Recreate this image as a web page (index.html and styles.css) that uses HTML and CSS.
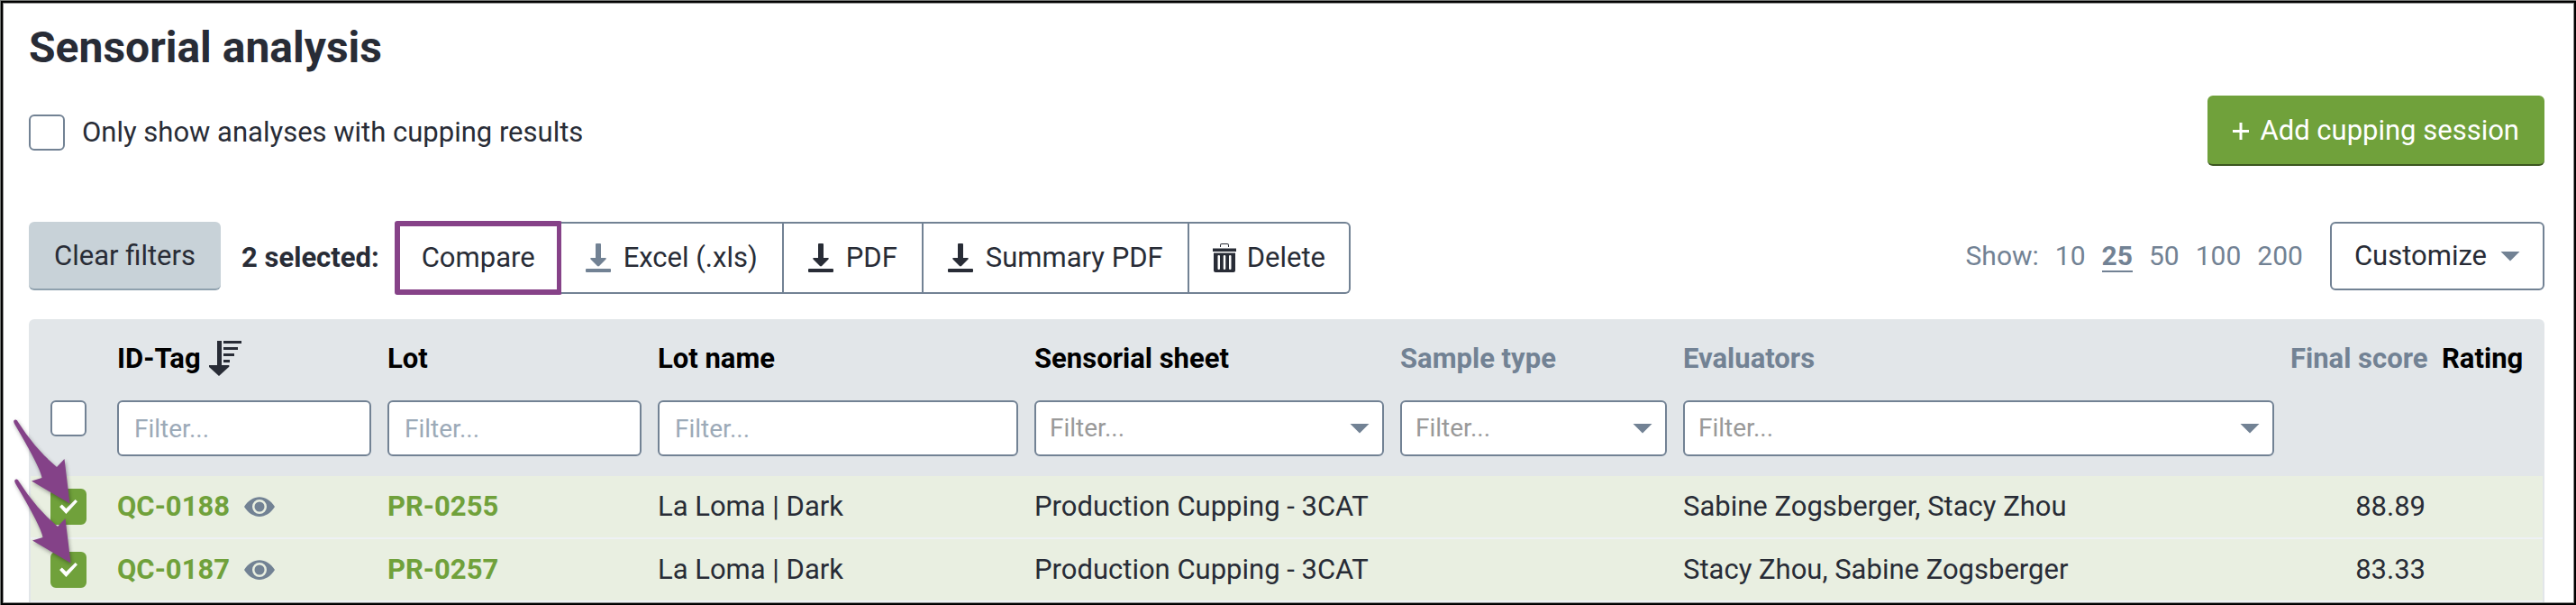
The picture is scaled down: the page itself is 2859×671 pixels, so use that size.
FILE: index.html
```html
<!DOCTYPE html>
<html lang="en">
<head>
<meta charset="utf-8">
<title>Sensorial analysis</title>
<link rel="stylesheet" href="styles.css">
</head>
<body>
<svg class="sprite" aria-hidden="true">
  <symbol id="download" viewBox="0 0 28 32">
    <path d="M12 0h4q1 0 1 1v15h5q1.500 0 .5 1.500L15 25q-1 .8-2 0l-7.500-7.500Q4.500 16 6 16h5V1q0-1 1-1z"/>
    <rect x="0" y="28" width="28" height="4" rx="1"/>
  </symbol>
  <symbol id="trash" viewBox="0 0 26 32">
    <path d="M8 4V2q0-2 2-2h6q2 0 2 2v2h-1V2q0-1-1-1h-6q-1 0-1 1v2zM0 5.500h26v3.500H0z"/>
    <path fill-rule="evenodd" d="M1 10.500h24V30q0 2-2 2H3q-2 0-2-2zM5.500 14v14q0 1 1.250 1T8 28V14q0-1-1.250-1T5.500 14zm6.250 0v14q0 1 1.250 1t1.250-1V14q0-1-1.250-1t-1.250 1zM18 14v14q0 1 1.250 1t1.250-1V14q0-1-1.250-1T18 14z"/>
  </symbol>
  <symbol id="sort" viewBox="0 0 36 40">
    <path d="M9 0h5v27h8q1 1 0 2L11 39 0 29q-1-2 0-2h9zM16 0h20v3H16zM16 7h16v3H16zM16 14h12v3H16zM16 21h7v3h-7z"/>
  </symbol>
  <symbol id="eye" viewBox="0 0 34 22">
    <path fill-rule="evenodd" d="M0 11C9-3.500 25-3.500 34 11 25 25.500 9 25.500 0 11zM17 3a8 8 0 1 0 0 16 8 8 0 1 0 0-16z"/>
    <circle cx="17" cy="11" r="5.500"/>
  </symbol>
</svg>
<main class="frame">
  <h1 class="title">Sensorial analysis</h1>

  <div class="options">
    <label class="option"><input class="check" type="checkbox"> Only show analyses with cupping results</label>
    <button class="btn btn-add" type="button"><svg class="plus" viewBox="0 0 18 20" aria-hidden="true"><path d="M7.500 1h3v8H18v3h-7.500v8h-3v-8H0V9h7.500z"/></svg>Add cupping session</button>
  </div>

  <div class="toolbar">
    <button class="btn btn-clear" type="button">Clear filters</button>
    <strong class="selected">2 selected:</strong>
    <div class="group">
      <button class="group-btn compare" type="button">Compare</button>
      <button class="group-btn" type="button"><svg class="icon muted"><use href="#download"/></svg>Excel (.xls)</button>
      <button class="group-btn" type="button"><svg class="icon"><use href="#download"/></svg>PDF</button>
      <button class="group-btn" type="button"><svg class="icon"><use href="#download"/></svg>Summary PDF</button>
      <button class="group-btn delete" type="button"><svg class="icon"><use href="#trash"/></svg>Delete</button>
    </div>
    <nav class="sizes" aria-label="Rows per page">
      <span>Show:</span>
      <a href="#">10</a>
      <a class="current" href="#">25</a>
      <a href="#">50</a>
      <a href="#">100</a>
      <a href="#">200</a>
    </nav>
    <button class="btn btn-customize" type="button">Customize<span class="caret"></span></button>
  </div>

  <div class="results">
    <table class="table">
      <colgroup>
        <col class="c-check"><col class="c-tag"><col class="c-lot"><col class="c-name"><col class="c-sheet"><col class="c-type"><col><col class="c-score"><col class="c-rating">
      </colgroup>
      <thead>
        <tr class="heads">
          <td></td>
          <th scope="col"><span class="sorted">ID-Tag<svg class="sort" aria-hidden="true"><use href="#sort"/></svg></span></th>
          <th scope="col">Lot</th>
          <th scope="col">Lot name</th>
          <th scope="col">Sensorial sheet</th>
          <th scope="col" class="dim">Sample type</th>
          <th scope="col" class="dim">Evaluators</th>
          <th scope="col" class="dim num">Final score</th>
          <th scope="col">Rating</th>
        </tr>
        <tr class="filters">
          <td class="pick"><input class="check" type="checkbox" aria-label="Select all"></td>
          <td><input class="field" type="text" placeholder="Filter..." aria-label="Filter ID-Tag"></td>
          <td><input class="field" type="text" placeholder="Filter..." aria-label="Filter lot"></td>
          <td><input class="field" type="text" placeholder="Filter..." aria-label="Filter lot name"></td>
          <td><div class="drop"><select class="field" aria-label="Filter sensorial sheet"><option>Filter...</option></select><span class="caret"></span></div></td>
          <td><div class="drop"><select class="field" aria-label="Filter sample type"><option>Filter...</option></select><span class="caret"></span></div></td>
          <td><div class="drop"><select class="field" aria-label="Filter evaluators"><option>Filter...</option></select><span class="caret"></span></div></td>
          <td></td>
          <td></td>
        </tr>
      </thead>
      <tbody>
        <tr>
          <td class="pick"><input class="check" type="checkbox" checked aria-label="Select QC-0188"></td>
          <td><div class="tag"><a class="link" href="#">QC-0188</a><svg class="eye" aria-hidden="true"><use href="#eye"/></svg></div></td>
          <td><a class="link" href="#">PR-0255</a></td>
          <td>La Loma | Dark</td>
          <td>Production Cupping - 3CAT</td>
          <td></td>
          <td>Sabine Zogsberger, Stacy Zhou</td>
          <td class="num">88.89</td>
          <td></td>
        </tr>
        <tr>
          <td class="pick"><input class="check" type="checkbox" checked aria-label="Select QC-0187"></td>
          <td><div class="tag"><a class="link" href="#">QC-0187</a><svg class="eye" aria-hidden="true"><use href="#eye"/></svg></div></td>
          <td><a class="link" href="#">PR-0257</a></td>
          <td>La Loma | Dark</td>
          <td>Production Cupping - 3CAT</td>
          <td></td>
          <td>Stacy Zhou, Sabine Zogsberger</td>
          <td class="num">83.33</td>
          <td></td>
        </tr>
      </tbody>
    </table>
    <svg class="pointers" viewBox="0 0 84 184" aria-hidden="true">
      <path id="pointer" d="M3 7Q1 3 4 2.500Q6 2 7 5Q26 35 50 55L58.500 46L64.500 95.500L22 70.500L33.500 67Q32 56 3 7z"/>
      <use href="#pointer" y="66" x="1"/>
    </svg>
  </div>
</main>
</body>
</html>
```
FILE: styles.css
```css
* { box-sizing: border-box; }

html {
  min-height: 100%;
  border-top: 1px solid #777a78;
  border-left: 1px solid #777a78;
  background: #fff;
}

body {
  margin: 0;
  color: #282c36;
  font: 31px/36px Roboto, "Liberation Sans", sans-serif;
}

button, input, select { margin: 0; color: inherit; font: inherit; }
button { cursor: pointer; }
.sprite { display: none; }

.frame {
  min-height: calc(100vh - 1px);
  padding: 22px 33px 0 29px;
  border: 2px solid #000;
  box-shadow: inset 0 0 0 1px #8a8a8a;
}

.title {
  margin: 0 0 25px;
  font-size: 48px;
  line-height: 56px;
  font-weight: 700;
}

.check {
  display: block;
  flex: none;
  width: 40px;
  height: 40px;
  border: 2px solid #728294;
  border-radius: 6px;
  background: #fff;
  appearance: none;
}

.check:checked {
  display: grid;
  place-items: center;
  border-color: #70a13b;
  background: #70a13b;
}

.check:checked::after {
  content: "";
  width: 20px;
  height: 16px;
  background: #fff;
  clip-path: polygon(0 50%, 14% 35%, 37% 62%, 88% 0, 100% 14%, 37% 100%);
}

.options {
  display: flex;
  align-items: center;
  justify-content: space-between;
  margin-bottom: 62px;
}

.option { display: flex; align-items: center; gap: 19px; padding-top: 3px; }

.btn {
  display: flex;
  align-items: center;
  flex: none;
  height: 76px;
  padding: 2px 28px 0;
  border: 0 solid;
  border-radius: 6px;
}

.btn-add {
  gap: 12px;
  height: 78px;
  border-bottom: 2px solid #3b5620;
  background: #70a13b;
  color: #fff;
}

.plus { width: 18px; height: 20px; fill: #fff; }

.btn-clear {
  border-bottom: 2px solid #8fa1ae;
  background: #c8d2d8;
}

.btn-customize {
  gap: 15px;
  margin-left: 30px;
  padding: 0 25px;
  border: 2px solid #728294;
  background: #fff;
}

.toolbar {
  display: flex;
  align-items: flex-start;
  margin-bottom: 28px;
}

.selected { margin: 22px 18px 0 23px; }

.group { display: flex; }

.group-btn {
  display: flex;
  align-items: center;
  gap: 14px;
  height: 80px;
  padding: 0 27px;
  border: 2px solid #728294;
  border-left-width: 0;
  background: #fff;
}

.compare {
  border-width: 2px;
  outline: 6px solid #864288;
  outline-offset: -5px;
  border-radius: 2px;
}

.delete { gap: 12px; padding: 0 26px; border-radius: 0 6px 6px 0; }

.icon { width: 28px; height: 32px; fill: #282c36; }
.delete .icon { width: 26px; }
.muted { width: 28px; fill: #728294; }

.sizes {
  display: flex;
  gap: 18px;
  margin: 20px 0 0 auto;
  color: #728294;
  font-size: 30px;
}

.sizes a { color: inherit; text-decoration: none; }
.sizes .current { border-bottom: 2px solid; font-weight: 700; line-height: 30px; padding-top: 3px; }

.caret {
  width: 22px;
  height: 11px;
  background: #728294;
  clip-path: polygon(0 0, 100% 0, 50% 100%);
  pointer-events: none;
}

.results { position: relative; }

.table {
  width: 100%;
  border: 2px solid #e2e6e9;
  border-bottom: 0;
  border-radius: 6px 6px 0 0;
  border-spacing: 0;
  table-layout: fixed;
}

.c-check { width: 87px; }
.c-tag, .c-lot { width: 300px; }
.c-name { width: 418px; }
.c-sheet { width: 406px; }
.c-type { width: 314px; }
.c-score { width: 168px; }
.c-rating { width: 121px; }

.table th, .table td {
  padding: 0 9px;
  text-align: left;
  white-space: nowrap;
}

.table .pick { padding-left: 22px; }
.table .num { text-align: right; }

thead { background: #e2e6e9; color: #000; }
.table .dim { color: #728294; }
.heads > * { height: 78px; }
.table .heads th { padding-top: 6px; }
.filters > * { height: 94px; vertical-align: top; }
.table .filters td { padding-top: 10px; }

.sorted { display: flex; align-items: center; gap: 9px; }
.sort { width: 36px; height: 40px; fill: #282c36; }

.field {
  display: block;
  width: 100%;
  height: 62px;
  padding: 0 17px;
  border: 2px solid #728294;
  border-radius: 6px;
  background: #fff;
  font-size: 28px;
  appearance: none;
}

.field::placeholder { color: #9caab8; opacity: 1; }

.drop { display: grid; align-items: center; }
.drop > * { grid-area: 1 / 1; }
.drop .field { padding: 0 15px; color: #999; }
.drop .caret { justify-self: end; margin-right: 16px; z-index: 1; }

tbody td {
  height: 70px;
  border-bottom: 2px solid #eef1f4;
  background: #e9efe1;
}

.tag { display: flex; align-items: center; gap: 16px; }
.eye { width: 34px; height: 22px; fill: #728294; }
.link { color: #70a13b; font-weight: 700; text-decoration: none; }

.pointers {
  position: absolute;
  top: 109px;
  left: -19px;
  width: 84px;
  height: 184px;
  fill: #844288;
  filter: drop-shadow(1px 2px 2px rgba(0, 0, 0, .35));
}
```
